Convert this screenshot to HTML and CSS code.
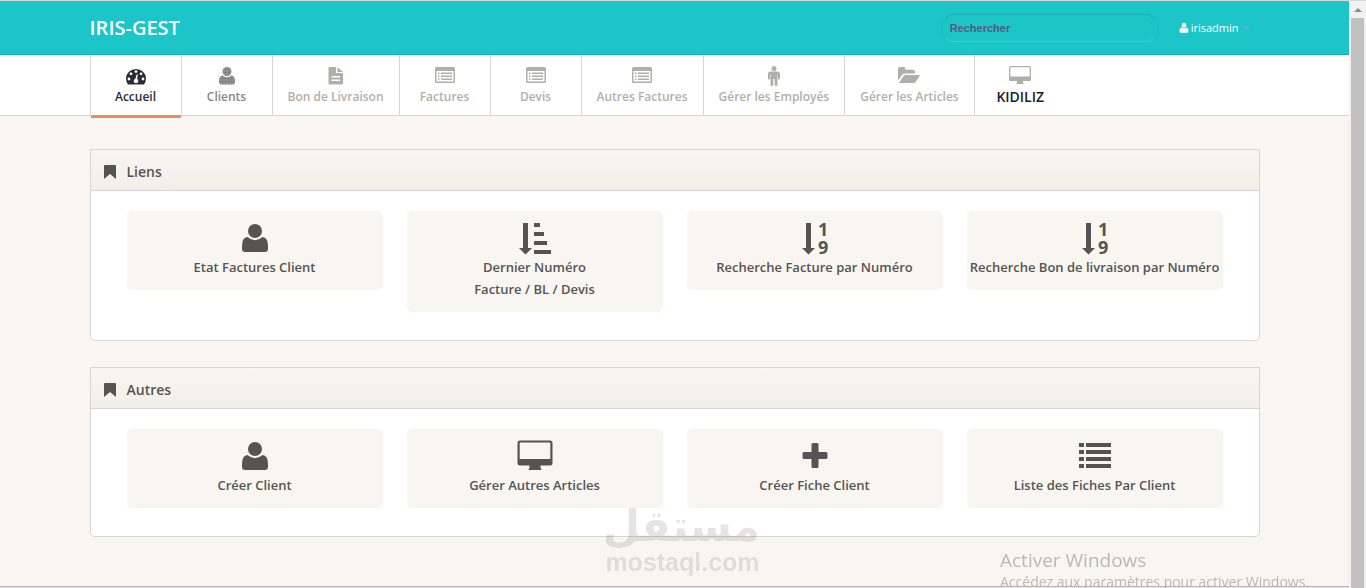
FILE: index.html
```
<!doctype html>
<html lang="fr">
<head>
    <meta charset="utf-8">
    <title>IRIS-GEST</title>
    <link rel="stylesheet" href="styles.css">
</head>
<body>
    <!-- icons -->
    <svg class="sprite" aria-hidden="true">
        <defs>
            <pattern id="dots" width="3" height="3" patternUnits="userSpaceOnUse">
                <rect width="3" height="3" fill="#8f8f92"/>
                <rect x="1" y="1" width="1" height="1" fill="#66667c"/>
            </pattern>
        </defs>
        <symbol id="i-user" viewBox="0 0 36 34">
            <circle cx="18" cy="9" r="7"/>
            <path d="M10.500 15q3.500 3.200 7.500 3.200t7.500-3.200q5.500.5 5.500 9v3q0 3-3.200 3H8.200q-3.200 0-3.200-3v-3q0-8.500 5.500-9z"/>
        </symbol>
        <symbol id="i-amount" viewBox="0 0 36 34">
            <path d="M6 1h5v25h4l-6.500 6.500L2 26h4zM17 1h6v4h-6zM17 10h10v4H17zM17 19h13v4H17zM17 28h17v4H17z"/>
        </symbol>
        <symbol id="i-arrow" viewBox="0 0 36 34">
            <path d="M9 1h5v25h4l-6.500 6.500L5 26h4z"/>
        </symbol>
        <symbol id="i-desktop" viewBox="0 0 36 34">
            <path fill-rule="evenodd" d="M3 .5h30q2.500 0 2.500 2.500v20q0 2.500-2.500 2.500h-9.500v2l1 2.500h-13l1-2.500v-2H3Q.5 25.500.5 23V3Q.5.5 3 .5zM3.500 2.500q-.8 0-.8.8V19h30.600V3.300q0-.8-.8-.8z"/>
        </symbol>
        <symbol id="i-plus" viewBox="0 0 36 34">
            <path d="M16 3h4q1.500 0 1.500 1.500V12H29q1.500 0 1.500 1.500v4Q30.500 19 29 19h-7.500v7.500q0 1.500-1.500 1.500h-4q-1.500 0-1.500-1.500V19H7q-1.500 0-1.500-1.500v-4Q5.500 12 7 12h7.500V4.500Q14.500 3 16 3z"/>
        </symbol>
        <symbol id="i-list" viewBox="0 0 36 34">
            <path d="M2 3h5v4H2zM9 3h25v4H9zM2 10h5v4H2zM9 10h25v4H9zM2 17h5v4H2zM9 17h25v4H9zM2 24h5v4H2zM9 24h25v4H9z"/>
        </symbol>
        <symbol id="i-bookmark" viewBox="0 0 12 14">
            <path d="M1 0h10q1 0 1 1v13l-6-5-6 5V1q0-1 1-1z"/>
        </symbol>
        <symbol id="n-dash" viewBox="0 0 24 22">
            <path d="M4 19.500q-2-3-2-6a10 9.500 0 0 1 20 0q0 3-2 6z"/>
            <g fill="#fff">
                <circle cx="5" cy="14" r="1.400"/>
                <circle cx="7" cy="8.800" r="1.400"/>
                <circle cx="12" cy="6.600" r="1.400"/>
                <circle cx="17" cy="8.800" r="1.400"/>
                <circle cx="19" cy="14" r="1.400"/>
                <path d="M12.600 9.500h1.300l-.7 4.500q1.300.9 1.100 2.500-.4 1.700-2.300 1.800-2-.1-2.300-1.800-.2-2 1.700-2.800z"/>
            </g>
        </symbol>
        <symbol id="n-user" viewBox="0 0 24 22">
            <circle cx="12" cy="6.500" r="4.500"/>
            <path d="M7.500 10.500q2 1.800 4.500 1.800t4.500-1.800q3.500.5 3.500 6 0 3-2 3h-12q-2 0-2-3 0-5.500 3.500-6z"/>
        </symbol>
        <symbol id="n-file" viewBox="0 0 24 22">
            <path fill-rule="evenodd" d="M5.500 2H12v6h7v10.500q0 1-1 1H5.500q-1 0-1-1V3q0-1 1-1zM7.500 11v1.500H16V11zM7.500 14.500V16H16v-1.500z"/>
            <path d="M13.500 2l5.500 5h-5.500z"/>
        </symbol>
        <symbol id="n-list" viewBox="0 0 24 22">
            <path fill-rule="evenodd" d="M3.500 2h17Q22 2 22 3.500v13q0 1.500-1.500 1.500h-17Q2 18 2 16.500v-13Q2 2 3.500 2zM3.500 6v10.500h17V6z"/>
            <path d="M5 7.500h1.500V9H5zM8 7.500h11V9H8zM5 10.500h1.500V12H5zM8 10.500h11V12H8zM5 13.500h1.500V15H5zM8 13.500h11V15H8z"/>
        </symbol>
        <symbol id="n-male" viewBox="0 0 24 22">
            <circle cx="12" cy="3.500" r="2.500"/>
            <path d="M8.500 6.500h7Q18 6.500 18 9v4.500q0 1-1 1t-1-1V9.500h-.5v10.300q0 1.200-1.400 1.200t-1.400-1.200V14h-1.400v5.800q0 1.200-1.400 1.200t-1.400-1.200V9.500H8v4q0 1-1 1t-1-1V9q0-2.500 2.500-2.500z"/>
        </symbol>
        <symbol id="n-folder" viewBox="0 0 24 22">
            <path d="M1 15.500V4q0-2 2-2h3.500q2 0 2 2v.7H16q2 0 2 2v1.800H8q-2 0-3.300 1.700z"/>
            <path d="M2 18l4.300-6.700q.9-1.300 2.200-1.300h13q1.800 0 .9 1.300l-3.600 5.400Q18 18 16.500 18z"/>
        </symbol>
        <symbol id="n-desktop" viewBox="0 0 24 22">
            <path fill-rule="evenodd" d="M2.500 1h19Q23 1 23 2.500v12q0 1.500-1.500 1.500H15v1.500l1 1.500H8l1-1.500V16H2.500Q1 16 1 14.500v-12Q1 1 2.500 1zM2.300 2.200v9.300h19.400V2.200z"/>
        </symbol>
    </svg>

    <div class="page">
        <header class="navbar">
            <div class="container navbar-inner">
                <a class="brand" href="#">IRIS-GEST</a>
                <form class="navbar-search">
                    <input type="text" class="search-query" placeholder="Rechercher" aria-label="Rechercher">
                </form>
                <a class="user-menu" href="#">
                    <svg class="user-icon" viewBox="4 2 28 29"><use href="#i-user" width="36" height="34"/></svg>
                    irisadmin
                    <b class="caret"></b>
                </a>
            </div>
        </header>

        <nav class="subnavbar">
            <ul class="container mainnav">
                <li class="active"><a href="#"><svg class="nav-icon"><use href="#n-dash"/></svg><span>Accueil</span></a></li>
                <li class="hover"><a href="#"><svg class="nav-icon"><use href="#n-user"/></svg><span>Clients</span></a></li>
                <li><a href="#"><svg class="nav-icon"><use href="#n-file"/></svg><span>Bon de Livraison</span></a></li>
                <li><a href="#"><svg class="nav-icon"><use href="#n-list"/></svg><span>Factures</span></a></li>
                <li><a href="#"><svg class="nav-icon"><use href="#n-list"/></svg><span>Devis</span></a></li>
                <li><a href="#"><svg class="nav-icon"><use href="#n-list"/></svg><span>Autres Factures</span></a></li>
                <li><a href="#"><svg class="nav-icon"><use href="#n-male"/></svg><span>Gérer les Employés</span></a></li>
                <li><a href="#"><svg class="nav-icon"><use href="#n-folder"/></svg><span>Gérer les Articles</span></a></li>
                <li class="company"><a href="#"><svg class="nav-icon"><use href="#n-desktop"/></svg><span>KIDILIZ</span></a></li>
            </ul>
        </nav>

        <main class="container main">
            <section class="widget">
                <div class="widget-header">
                    <svg class="bookmark"><use href="#i-bookmark"/></svg>
                    <h3>Liens</h3>
                </div>
                <div class="shortcuts">
                    <a class="shortcut" href="#"><svg class="shortcut-icon"><use href="#i-user"/></svg><span>Etat Factures Client</span></a>
                    <a class="shortcut" href="#"><svg class="shortcut-icon"><use href="#i-amount"/></svg><span>Dernier Numéro<br>Facture / BL / Devis</span></a>
                    <a class="shortcut" href="#">
                        <svg class="shortcut-icon"><use href="#i-arrow"/><text x="21" y="14">1</text><text x="21" y="32">9</text></svg>
                        <span>Recherche Facture par Numéro</span>
                    </a>
                    <a class="shortcut" href="#">
                        <svg class="shortcut-icon"><use href="#i-arrow"/><text x="21" y="14">1</text><text x="21" y="32">9</text></svg>
                        <span>Recherche Bon de livraison par Numéro</span>
                    </a>
                </div>
            </section>

            <section class="widget">
                <div class="widget-header">
                    <svg class="bookmark"><use href="#i-bookmark"/></svg>
                    <h3>Autres</h3>
                </div>
                <div class="shortcuts">
                    <a class="shortcut" href="#"><svg class="shortcut-icon"><use href="#i-user"/></svg><span>Créer Client</span></a>
                    <a class="shortcut" href="#"><svg class="shortcut-icon"><use href="#i-desktop"/></svg><span>Gérer Autres Articles</span></a>
                    <a class="shortcut" href="#"><svg class="shortcut-icon"><use href="#i-plus"/></svg><span>Créer Fiche Client</span></a>
                    <a class="shortcut" href="#"><svg class="shortcut-icon"><use href="#i-list"/></svg><span>Liste des Fiches Par Client</span></a>
                </div>
            </section>
        </main>
        <footer class="footer"></footer>
    </div>

    <div class="scrollbar" aria-hidden="true">
        <div class="scroll-up"></div>
        <div class="scroll-thumb"></div>
    </div>

    <div class="watermark">
        <div class="watermark-ar" lang="ar" dir="rtl">مستقل</div>
        <div class="watermark-url">mostaql.com</div>
    </div>

    <div class="activation">
        <div class="activation-title">Activer Windows</div>
        <div>Accédez aux paramètres pour activer Windows.</div>
    </div>
</body>
</html>
```
FILE: styles.css
```
* {
    box-sizing: border-box;
}
body {
    display: flex;
    min-height: 100vh;
    margin: 0;
    border-top: 1px solid #d9d9d9;
    background: #f9f6f1;
    color: #545454;
    font: 600 13px/22px "Open Sans", sans-serif;
}
a {
    color: inherit;
    text-decoration: none;
}
svg {
    display: block;
    fill: currentColor;
}
.sprite {
    position: absolute;
    width: 0;
    height: 0;
}
.page {
    display: flex;
    flex: 1;
    flex-direction: column;
    min-width: 0;
}
.container {
    width: 100%;
    max-width: 1170px;
    margin: 0 auto;
}

/* top bar */
.navbar {
    background: #1cc5c7;
    border-bottom: 1px solid #18adb0;
}
.navbar-inner {
    display: flex;
    align-items: center;
    height: 53px;
    padding-right: 10px;
}
.brand {
    color: #fff;
    font-size: 20px;
}
.navbar-search {
    margin: 0 20px 0 auto;
}
.search-query {
    display: block;
    width: 218px;
    height: 28px;
    padding: 0 8px;
    border: 1px solid #1fbec1;
    border-top-color: #19afb3;
    border-bottom-color: #33d3d6;
    border-radius: 14px;
    background: transparent;
    color: #555b7c;
    font: bold 11px "Liberation Sans", sans-serif;
}
.search-query::placeholder {
    color: #555b7c;
    opacity: 1;
}
.user-menu {
    display: flex;
    align-items: center;
    gap: 2px;
    color: #fff;
    font-size: 11px;
    font-weight: 400;
}
.user-icon {
    width: 10px;
    height: 10px;
}
.caret {
    width: 0;
    margin-left: 1px;
    border: 4px solid transparent;
    border-top-color: #4fb9d8;
    border-bottom: 0;
}

/* main menu */
.subnavbar {
    background: #fff;
    border-bottom: 1px solid #d6d6d6;
}
.mainnav {
    display: flex;
    height: 60px;
    padding: 0;
    list-style: none;
    border-left: 1px solid #d6d6d6;
}
.mainnav li {
    min-width: 91px;
    border-right: 1px solid #d6d6d6;
    color: #b2afaa;
}
.mainnav a {
    display: flex;
    flex-direction: column;
    align-items: center;
    height: 60px;
    padding: 10px 15px 0;
    font-size: 12px;
    line-height: 20px;
    white-space: nowrap;
}
.mainnav .active {
    color: #2b2b38;
}
.mainnav .active a {
    height: 63px;
    border-bottom: 3px solid #e78e5c;
}
.mainnav .hover {
    color: #888;
}
.mainnav .hover svg {
    fill: url(#dots);
}
.mainnav .company {
    border-right: 0;
}
.company span {
    color: #1b1b28;
    font-size: 14px;
}
.nav-icon {
    width: 24px;
    height: 22px;
}

/* widgets */
.main {
    flex: 1;
    padding: 33px 0 23px;
}
.widget {
    margin-bottom: 26px;
    border: 1px solid #d6d6d6;
    border-radius: 0 0 5px 5px;
    background: #fff;
}
.widget-header {
    display: flex;
    align-items: center;
    gap: 11px;
    height: 41px;
    padding: 3px 13px 0;
    border-bottom: 1px solid #d6d6d6;
    background: linear-gradient(#f9f6f1, #f2efea);
}
.widget-header h3 {
    margin: 0;
    font-size: 14px;
    font-weight: 600;
}
.bookmark {
    width: 12px;
    height: 14px;
}
.shortcuts {
    display: grid;
    grid-template-columns: repeat(4, 1fr);
    align-items: start;
    gap: 24px;
    padding: 20px 36px 28px;
}
.shortcut {
    display: flex;
    flex-direction: column;
    align-items: center;
    padding: 11px 0 12px;
    border-radius: 5px;
    background: #f9f6f1;
    text-align: center;
    white-space: nowrap;
}
.shortcut-icon {
    width: 36px;
    height: 34px;
    font-size: 18px;
    font-weight: 700;
}
.footer {
    height: 2px;
    border-top: 1px solid #b5b7ba;
    background: #e4e4e4;
}

/* window scroll bar */
.scrollbar {
    display: flex;
    flex-direction: column;
    width: 17px;
    padding: 0 2px;
    background: #f1f1f1;
}
.scroll-up {
    align-self: center;
    margin: 7px 0 6px;
    border: 4px solid transparent;
    border-top: 0;
    border-bottom-color: #8b8b8b;
}
.scroll-thumb {
    flex: 1;
    background: #c1c1c1;
}

/* overlays */
.watermark {
    position: fixed;
    bottom: 12px;
    left: 605px;
    width: 155px;
    color: #000;
    opacity: 0.1;
    text-align: center;
    white-space: nowrap;
}
.watermark-ar {
    font: bold 43px/44px "DejaVu Sans", sans-serif;
}
.watermark-url {
    font: bold 25px/28px "Liberation Sans", sans-serif;
}
.activation {
    position: fixed;
    bottom: -5px;
    left: 1000px;
    color: #b9b9b9;
    font-size: 14px;
    font-weight: 400;
    white-space: nowrap;
}
.activation-title {
    font-size: 19px;
}
```
